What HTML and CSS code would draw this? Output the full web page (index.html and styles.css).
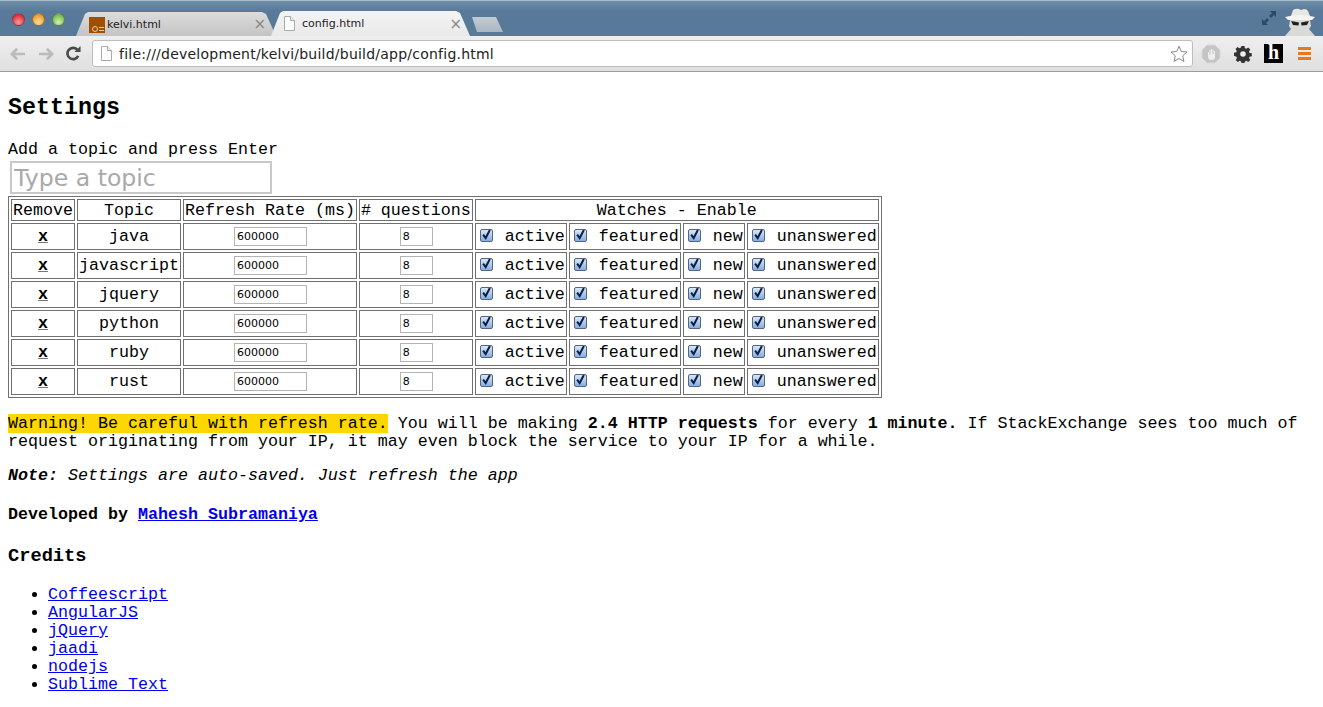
FILE: index.html
```html
<!DOCTYPE html>
<html lang="en">
<head>
<meta charset="utf-8">
<title>config.html</title>
<link rel="stylesheet" href="styles.css">
</head>
<body>
<!-- browser window top -->
<header class="chrome">
  <div class="tabstrip">
    <div class="lights">
      <span class="light red"></span>
      <span class="light amber"></span>
      <span class="light green"></span>
    </div>
    <div class="tab back">
      <svg class="favicon" width="16" height="16" viewBox="0 0 16 16"><rect width="16" height="16" fill="#a04f00"/><circle cx="6" cy="12" r="2.5" fill="none" stroke="#eec9a0" stroke-width="1"/><path d="M10 10.500h5M10 13.500h5" stroke="#eec9a0"/></svg>
      <span class="tabname">kelvi.html</span>
      <span class="tabclose">&#215;</span>
    </div>
    <div class="tab front">
      <svg class="docicon" width="12" height="15" viewBox="0 0 12 15"><path d="M1.5 .5h6l4 4v10h-10z" fill="#fff" stroke="#aaa"/><path d="M7.5 .5v4h4" fill="#eee" stroke="#aaa"/></svg>
      <span class="tabname">config.html</span>
      <span class="tabclose">&#215;</span>
    </div>
    <div class="newtab"></div>
    <div class="spacer"></div>
    <svg class="fullscreen" width="16" height="16" viewBox="0 0 16 16"><path d="M9 1h6v6l-2-2-3 3-2-2 3-3z" fill="#2f4a63"/><path d="M7 15H1V9l2 2 3-3 2 2-3 3z" fill="#2f4a63"/></svg>
    <svg class="incognito" width="34" height="28" viewBox="0 0 34 28">
      <path d="M8 8l2-6q3-2 6-1l2 1 3-1q3 0 4 2l2 5z" fill="#e6e6e3"/>
      <path d="M2 9q15-4 30 0l-3 3H5z" fill="#f4f4f1"/>
      <path d="M7 12h20l1 6-2 3 6 7H2l6-7-2-3z" fill="#d9d9d6"/>
      <path d="M8 13l8 1.500-.5 3-5.500-.5zM26 13l-8 1.500.5 3 5.500-.5z" fill="#1f1f1f"/>
    </svg>
  </div>
  <div class="toolbar">
    <svg class="navbtn" width="16" height="14" viewBox="0 0 18 16"><path d="M8 2L2 8l6 6M2 8h15" fill="none" stroke="#bbb" stroke-width="3"/></svg>
    <svg class="navbtn" width="16" height="14" viewBox="0 0 18 16"><path d="M10 2l6 6-6 6M16 8H1" fill="none" stroke="#bbb" stroke-width="3"/></svg>
    <svg class="reload" width="15" height="15" viewBox="0 0 16 16"><path d="M13 10.500A6 6 0 1 1 12 4" fill="none" stroke="#4a4a4a" stroke-width="2.800"/><path d="M9 6.500h6.500V0z" fill="#4a4a4a"/></svg>
    <div class="omnibox">
      <svg class="docicon" width="12" height="15" viewBox="0 0 12 15"><path d="M1.5 .5h6l4 4v10h-10z" fill="#fff" stroke="#aaa"/><path d="M7.5 .5v4h4" fill="#eee" stroke="#aaa"/></svg>
      <span class="url">file:///development/kelvi/build/build/app/config.html</span>
      <svg class="star" width="18" height="18" viewBox="0 0 18 18"><path d="M9 1.200l2.300 5.300 5.700.5-4.300 3.800 1.300 5.700L9 13.500l-5 3 1.300-5.700L1 7l5.700-.5z" fill="#fff" stroke="#888"/></svg>
    </div>
    <svg class="ext stop" width="20" height="20" viewBox="0 0 20 20"><path d="M6 1h8l5 5v8l-5 5H6l-5-5V6z" fill="#c4c4c4" stroke="#d8d8d8"/><path d="M7 8v4q0 4 3.500 4t3.500-3V7h-1v3h-.5V5.500h-1V10h-.5V5h-1v5H9.500V6h-1v5H8V8z" fill="#eee"/></svg>
    <svg class="ext" width="18" height="18" viewBox="0 0 18 18"><path d="M7.500 1h3l.4 2.200 1.400.6 1.900-1.300 2.100 2.100-1.300 1.900.6 1.400 2.200.4v3l-2.200.4-.6 1.400 1.300 1.900-2.100 2.100-1.900-1.300-1.400.6-.4 1.900h-3l-.4-1.900-1.400-.6-1.900 1.300-2.100-2.100 1.300-1.900-.6-1.400L0 10.700v-3l2.200-.4.6-1.400-1.300-1.900 2.100-2.100 1.900 1.300 1.400-.6z" fill="#333"/><circle cx="9" cy="9" r="2.800" fill="#eee"/></svg>
    <span class="hbadge">h</span>
    <div class="menu"><span></span><span></span><span></span></div>
  </div>
</header>

<main class="page">
  <h1>Settings</h1>
  <div class="addlabel">Add a topic and press Enter</div>
  <input class="topicinput" type="text" placeholder="Type a topic">

  <table class="topics">
    <thead>
      <tr>
        <th>Remove</th>
        <th>Topic</th>
        <th>Refresh Rate (ms)</th>
        <th># questions</th>
        <th colspan="4">Watches - Enable</th>
      </tr>
    </thead>
    <tbody>
      <tr>
        <td><a class="remove">x</a></td>
        <td>java</td>
        <td><input class="rate" type="text" value="600000"></td>
        <td><input class="count" type="text" value="8"></td>
        <td><label class="watch"><input type="checkbox" checked> active</label></td>
        <td><label class="watch"><input type="checkbox" checked> featured</label></td>
        <td><label class="watch"><input type="checkbox" checked> new</label></td>
        <td><label class="watch"><input type="checkbox" checked> unanswered</label></td>
      </tr>
      <tr>
        <td><a class="remove">x</a></td>
        <td>javascript</td>
        <td><input class="rate" type="text" value="600000"></td>
        <td><input class="count" type="text" value="8"></td>
        <td><label class="watch"><input type="checkbox" checked> active</label></td>
        <td><label class="watch"><input type="checkbox" checked> featured</label></td>
        <td><label class="watch"><input type="checkbox" checked> new</label></td>
        <td><label class="watch"><input type="checkbox" checked> unanswered</label></td>
      </tr>
      <tr>
        <td><a class="remove">x</a></td>
        <td>jquery</td>
        <td><input class="rate" type="text" value="600000"></td>
        <td><input class="count" type="text" value="8"></td>
        <td><label class="watch"><input type="checkbox" checked> active</label></td>
        <td><label class="watch"><input type="checkbox" checked> featured</label></td>
        <td><label class="watch"><input type="checkbox" checked> new</label></td>
        <td><label class="watch"><input type="checkbox" checked> unanswered</label></td>
      </tr>
      <tr>
        <td><a class="remove">x</a></td>
        <td>python</td>
        <td><input class="rate" type="text" value="600000"></td>
        <td><input class="count" type="text" value="8"></td>
        <td><label class="watch"><input type="checkbox" checked> active</label></td>
        <td><label class="watch"><input type="checkbox" checked> featured</label></td>
        <td><label class="watch"><input type="checkbox" checked> new</label></td>
        <td><label class="watch"><input type="checkbox" checked> unanswered</label></td>
      </tr>
      <tr>
        <td><a class="remove">x</a></td>
        <td>ruby</td>
        <td><input class="rate" type="text" value="600000"></td>
        <td><input class="count" type="text" value="8"></td>
        <td><label class="watch"><input type="checkbox" checked> active</label></td>
        <td><label class="watch"><input type="checkbox" checked> featured</label></td>
        <td><label class="watch"><input type="checkbox" checked> new</label></td>
        <td><label class="watch"><input type="checkbox" checked> unanswered</label></td>
      </tr>
      <tr>
        <td><a class="remove">x</a></td>
        <td>rust</td>
        <td><input class="rate" type="text" value="600000"></td>
        <td><input class="count" type="text" value="8"></td>
        <td><label class="watch"><input type="checkbox" checked> active</label></td>
        <td><label class="watch"><input type="checkbox" checked> featured</label></td>
        <td><label class="watch"><input type="checkbox" checked> new</label></td>
        <td><label class="watch"><input type="checkbox" checked> unanswered</label></td>
      </tr>
    </tbody>
  </table>

  <p class="warning"><span class="hilite">Warning! Be careful with refresh rate.</span> You will be making <b>2.4 HTTP requests</b> for every <b>1 minute.</b> If StackExchange sees too much of request originating from your IP, it may even block the service to your IP for a while.</p>
  <p class="note"><b>Note:</b> Settings are auto-saved. Just refresh the app</p>
  <h4>Developed by <a href="#">Mahesh Subramaniya</a></h4>
  <h3>Credits</h3>
  <ul class="credits">
    <li><a href="#">Coffeescript</a></li>
    <li><a href="#">AngularJS</a></li>
    <li><a href="#">jQuery</a></li>
    <li><a href="#">jaadi</a></li>
    <li><a href="#">nodejs</a></li>
    <li><a href="#">Sublime Text</a></li>
  </ul>
</main>
</body>
</html>
```

FILE: styles.css
```css
html, body {
  margin: 0;
  background: #fff;
}
body {
  overflow: hidden;
  height: 707px;
}

/* browser window top */
.chrome {
  font-family: "DejaVu Sans", sans-serif;
  height: 72px;
}
.tabstrip {
  display: flex;
  align-items: flex-end;
  height: 36px;
  background: linear-gradient(#6f8ea9, #58799a 30%, #587a98);
  border-top: 1px solid #a9bccb;
  box-sizing: border-box;
}
.lights {
  display: flex;
  gap: 7px;
  align-self: flex-start;
  margin: 12px 0 0 12px;
  width: 64px;
}
.light {
  width: 13px;
  height: 13px;
  border-radius: 50%;
  border: 1px solid rgba(40, 50, 60, .45);
  box-sizing: border-box;
}
.red { background: radial-gradient(circle at 50% 75%, #ff9a9a, #e0303a 70%); }
.amber { background: radial-gradient(circle at 50% 75%, #ffdf9a, #ee9c30 70%); }
.green { background: radial-gradient(circle at 50% 75%, #d0f2ac, #7dbd54 70%); }
.tab {
  display: flex;
  align-items: center;
  height: 24px;
  box-sizing: border-box;
  font-size: 11px;
  color: #222;
  clip-path: polygon(0 100%, 9px 2px, 12px 0, calc(100% - 14px) 0, calc(100% - 10px) 2px, 100% 100%);
}
.tab.back {
  background: linear-gradient(#dcdcdc, #c4c4c4);
  padding: 0 10px 0 13px;
  width: 200px;
}
.tab.front {
  background: linear-gradient(#f4f4f4, #e9e9e9);
  padding: 0 8px 0 12px;
  margin-left: -5px;
  height: 25px;
  width: 199px;
}
.favicon {
  flex: none;
  margin-right: 2px;
  margin-top: 1px;
}
.docicon {
  flex: none;
}
.tab.front .docicon {
  margin-right: 7px;
}
.tabname {
  flex: 1;
}
.tabclose {
  font-size: 15px;
  color: #888;
}
.newtab {
  width: 31px;
  height: 15px;
  margin: 0 0 4px 2px;
  background: linear-gradient(#c3ccd4, #a9b5c1);
  clip-path: polygon(0 0, 24px 0, 31px 100%, 5px 100%);
}
.spacer {
  flex: 1;
}
.fullscreen {
  align-self: flex-start;
  margin: 9px 6px 0 0;
}
.incognito {
  margin-right: 6px;
}
.toolbar {
  display: flex;
  align-items: center;
  height: 36px;
  box-sizing: border-box;
  background: linear-gradient(#efefef, #dfdfdf);
  border-bottom: 1px solid #9d9d9d;
  padding-left: 10px;
}
.navbtn {
  margin-right: 12px;
}
.reload {
  margin-right: 11px;
}
.omnibox {
  display: flex;
  align-items: center;
  width: 1101px;
  height: 27px;
  box-sizing: border-box;
  background: #fff;
  border: 1px solid #bdbdbd;
  border-radius: 3px;
  padding: 0 4px 0 7px;
  margin-right: 8px;
}
.url {
  flex: 1;
  font-size: 14px;
  letter-spacing: .23px;
  color: #222;
  margin-left: 7px;
}
.ext {
  margin-right: 12px;
}
.ext.stop {
  margin-right: 13px;
}
.hbadge {
  width: 19px;
  height: 19px;
  background: #000;
  color: #fff;
  font: bold 20px/17px "Liberation Serif", serif;
  text-align: center;
  margin-right: 15px;
}
.menu {
  display: flex;
  flex-direction: column;
  gap: 2px;
  width: 13px;
}
.menu span {
  height: 3px;
  background: #e8791a;
}

/* page */
.page {
  font-family: "Liberation Mono", monospace;
  font-size: 16.67px;
  line-height: 18px;
  color: #000;
  padding: 0 8px;
}
h1 {
  font-size: 23.33px;
  line-height: 26px;
  margin: 23px 0 20px;
}
.topicinput {
  display: block;
  width: 262px;
  height: 33px;
  box-sizing: border-box;
  margin: 2px 0 2px 2px;
  padding: 0 2px;
  border: 2px solid #c8c8c8;
  font: 23.6px "DejaVu Sans", sans-serif;
}
.topicinput::placeholder {
  color: #a9a9a9;
}
.topics {
  border-spacing: 2px;
  border: 1px solid #707070;
  font-size: 16.67px;
  line-height: 18px;
}
.topics th {
  font-weight: normal;
  border: 1px solid #707070;
  padding: 2px 1px 0;
  height: 18px;
}
.topics td {
  border: 1px solid #707070;
  padding: 1px;
  height: 23px;
  text-align: center;
}
.remove {
  font-weight: bold;
  text-decoration: underline;
  text-decoration-color: #777;
}
.rate, .count {
  font: 11px "DejaVu Sans", sans-serif;
  box-sizing: border-box;
  height: 19px;
  margin-left: 1px;
  padding: 0 2px;
  border: 1px solid #b4b4b4;
  vertical-align: middle;
}
.rate {
  width: 73px;
}
.count {
  width: 33px;
}
.watch {
  display: block;
  text-align: left;
  white-space: pre;
  padding-left: 3px;
}
.watch input {
  appearance: none;
  width: 13px;
  height: 13px;
  margin: 0 2px 0 0;
  border: 1px solid #56657a;
  border-radius: 2px;
  vertical-align: -1px;
  background: url("data:image/svg+xml,%3Csvg xmlns='http://www.w3.org/2000/svg' viewBox='0 0 13 13'%3E%3Cpath d='M2.500 5.500l3 4L10.500 0' fill='none' stroke='%23102040' stroke-width='2.400'/%3E%3C/svg%3E") center/contain no-repeat, linear-gradient(#d8e8f8, #85ade6);
}
p {
  margin: 16px 0;
}
.warning {
  margin-top: 17px;
}
.note {
  font-style: italic;
}
.hilite {
  background: #ffd700;
}
h4 {
  font-size: 16.67px;
  line-height: 18px;
  margin: 21px 0;
}
h3 {
  font-size: 18.7px;
  line-height: 20px;
  margin: 22px 0 20px;
}
.credits {
  margin: 0;
  padding-left: 40px;
}
```
